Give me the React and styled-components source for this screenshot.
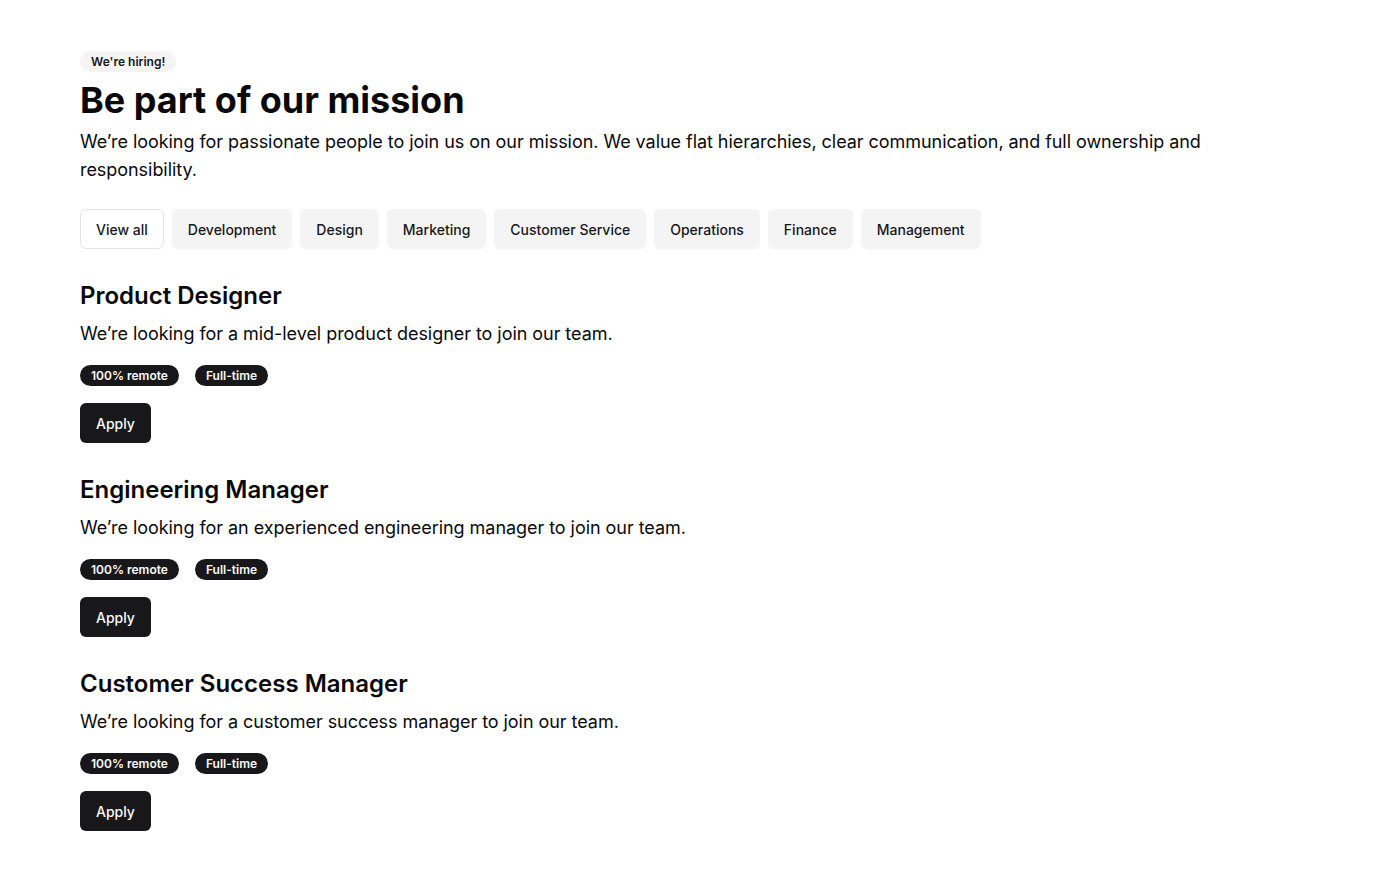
import React from "react";
import styled, { createGlobalStyle } from "styled-components";

const GlobalStyle = createGlobalStyle`
  * { box-sizing: border-box; }
  body {
    margin: 0;
    background: #fff;
    color: #09090b;
    font-family: Inter, "Liberation Sans", sans-serif;
  }
`;

const Page = styled.div`
  padding: 51px 80px 48px;
  max-width: 1376px;
`;

const Header = styled.header`
  display: flex;
  flex-direction: column;
  align-items: flex-start;
  gap: 8px;
`;

const Badge = styled.span`
  display: inline-flex;
  align-items: center;
  height: 21px;
  padding: 0 11px;
  border-radius: 999px;
  background: ${(p) => (p.dark ? "#18181b" : "#f4f4f5")};
  color: ${(p) => (p.dark ? "#fafafa" : "#18181b")};
  font-size: 12px;
  font-weight: 600;
  line-height: 16px;
`;

const Title = styled.h1`
  margin: 0;
  font-size: 36px;
  line-height: 40px;
  font-weight: 700;
`;

const Lead = styled.p`
  margin: 0;
  font-size: 18px;
  line-height: 28px;
  letter-spacing: -0.05px;
  max-width: 1216px;
`;

const Filters = styled.div`
  display: flex;
  flex-wrap: wrap;
  gap: 8px;
  margin-top: 25px;
`;

const FilterButton = styled.button`
  height: 40px;
  padding: 0 15px;
  border-radius: 6px;
  border: 1px solid ${(p) => (p.active ? "#e4e4e7" : "#f4f4f5")};
  background: ${(p) => (p.active ? "#fff" : "#f4f4f5")};
  color: #18181b;
  font-family: inherit;
  font-size: 14px;
  font-weight: 500;
  cursor: pointer;
`;

const Jobs = styled.div`
  display: flex;
  flex-direction: column;
  gap: 31px;
  margin-top: 31px;
`;

const Job = styled.article`
  display: flex;
  flex-direction: column;
  align-items: flex-start;
`;

const JobTitle = styled.h2`
  margin: 0;
  font-size: 24px;
  line-height: 32px;
  font-weight: 600;
`;

const JobText = styled.p`
  margin: 8px 0 0;
  font-size: 18px;
  line-height: 28px;
  letter-spacing: -0.05px;
`;

const Tags = styled.div`
  display: flex;
  gap: 16px;
  margin-top: 17px;
`;

const ApplyButton = styled.button`
  margin-top: 17px;
  height: 40px;
  padding: 0 16px;
  border: none;
  border-radius: 6px;
  background: #18181b;
  color: #fafafa;
  font-family: inherit;
  font-size: 14px;
  font-weight: 500;
  cursor: pointer;
`;

const filters = ["View all", "Development", "Design", "Marketing", "Customer Service", "Operations", "Finance", "Management"];

const jobs = [
  { title: "Product Designer", text: "We’re looking for a mid-level product designer to join our team." },
  { title: "Engineering Manager", text: "We’re looking for an experienced engineering manager to join our team." },
  { title: "Customer Success Manager", text: "We’re looking for a customer success manager to join our team." },
];

export default function App() {
  return (
    <Page>
      <GlobalStyle />
      <Header>
        <Badge>We're hiring!</Badge>
        <Title>Be part of our mission</Title>
        <Lead>
          We’re looking for passionate people to join us on our mission. We value flat hierarchies, clear communication, and full ownership and responsibility.
        </Lead>
      </Header>
      <Filters>
        {filters.map((f, i) => (
          <FilterButton key={f} active={i === 0}>{f}</FilterButton>
        ))}
      </Filters>
      <Jobs>
        {jobs.map((j) => (
          <Job key={j.title}>
            <JobTitle>{j.title}</JobTitle>
            <JobText>{j.text}</JobText>
            <Tags>
              <Badge dark>100% remote</Badge>
              <Badge dark>Full-time</Badge>
            </Tags>
            <ApplyButton>Apply</ApplyButton>
          </Job>
        ))}
      </Jobs>
    </Page>
  );
}
